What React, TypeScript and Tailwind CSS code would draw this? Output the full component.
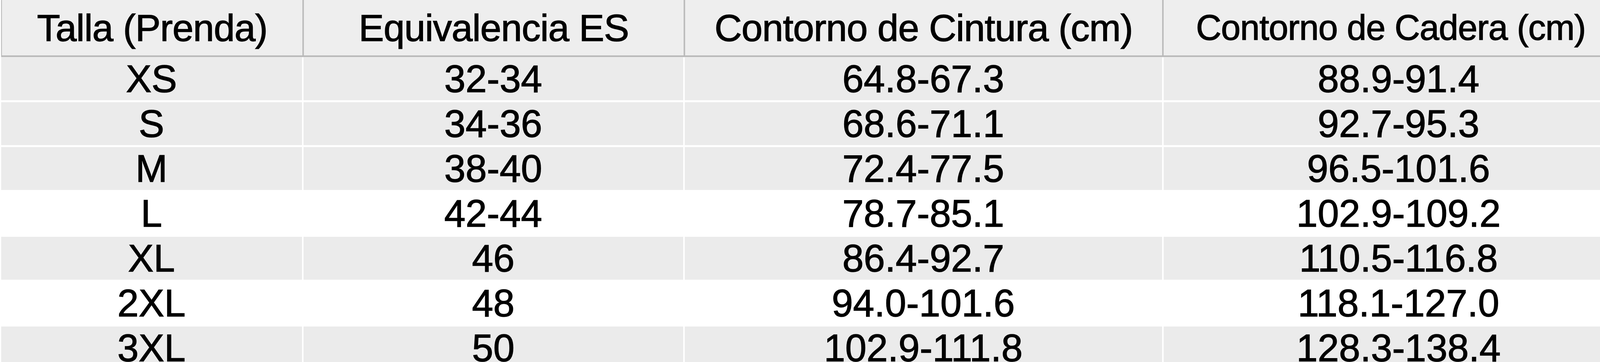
const headers = [
  "Talla (Prenda)",
  "Equivalencia ES",
  "Contorno de Cintura (cm)",
  "Contorno de Cadera (cm)",
];

const rows = [
  { size: "XS", es: "32-34", waist: "64.8-67.3", hip: "88.9-91.4", shaded: true },
  { size: "S", es: "34-36", waist: "68.6-71.1", hip: "92.7-95.3", shaded: true },
  { size: "M", es: "38-40", waist: "72.4-77.5", hip: "96.5-101.6", shaded: true },
  { size: "L", es: "42-44", waist: "78.7-85.1", hip: "102.9-109.2", shaded: false },
  { size: "XL", es: "46", waist: "86.4-92.7", hip: "110.5-116.8", shaded: true },
  { size: "2XL", es: "48", waist: "94.0-101.6", hip: "118.1-127.0", shaded: false },
  { size: "3XL", es: "50", waist: "102.9-111.8", hip: "128.3-138.4", shaded: true },
];

// column shares of the frame width; the last column runs past the right edge
const widths = ["w-[18.9%]", "w-[23.85%]", "w-[29.95%]", "w-[29.4%]"];

export default function App() {
  return (
    <div className="w-full h-[928px] overflow-hidden bg-white pl-[3px] font-['Liberation_Sans',Arial,sans-serif] text-black [-webkit-text-stroke:1.5px_#000]">
      {/* header row */}
      <div className="flex h-[146px] bg-[#eeeeee] border-l-2 border-b-4 border-[#b9b9b9] shadow-[0_1px_2px_rgba(0,0,0,0.15)]">
        {headers.map((h, i) => (
          <div
            key={h}
            className={`${widths[i]} shrink-0 flex items-center justify-center whitespace-nowrap leading-none tracking-[-1px] ${
              i < 3 ? "text-[97px] border-r-4 border-[#bdbdbd]" : "text-[90px] pr-[40px]"
            }`}
          >
            {h}
          </div>
        ))}
      </div>

      {/* body */}
      <div className="pt-[1px]">
        {rows.map((r) => (
          <div key={r.size} className="flex h-[115px] border-b-[5px] border-white">
            {[r.size, r.es, r.waist, r.hip].map((v, i) => (
              <div
                key={i}
                className={`${widths[i]} shrink-0 flex items-center justify-center whitespace-nowrap text-[98px] leading-none ${
                  r.shaded ? "bg-[#ebebeb]" : "bg-white"
                } ${i < 3 ? "border-r-4 border-white" : ""}`}
              >
                {v}
              </div>
            ))}
          </div>
        ))}
      </div>
    </div>
  );
}
